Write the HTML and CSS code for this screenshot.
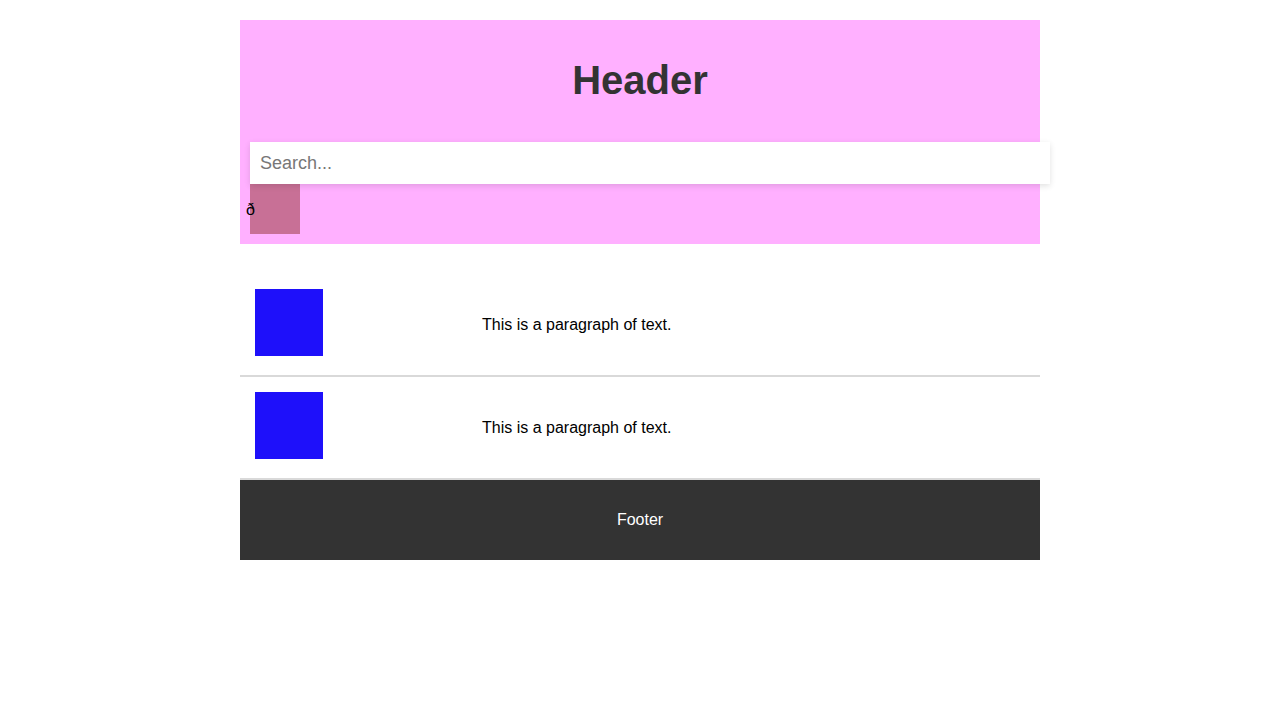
FILE: index.html
```html
<!DOCTYPE html>
<html>
<head>
<meta charset="utf-8">
<link rel="stylesheet" href="styles.css">
</head>
<body>
<div class="page">
  <header class="header">
    <h1 class="title">Header</h1>
    <form class="search">
      <input class="search-input" type="text" placeholder="Search...">
      <button class="search-btn" type="button"><span class="glyph">ð</span></button>
    </form>
  </header>
  <main class="list">
    <div class="row">
      <div class="thumb-wrap"><div class="thumb"></div></div>
      <p class="text">This is a paragraph of text.</p>
    </div>
    <div class="row">
      <div class="thumb-wrap"><div class="thumb"></div></div>
      <p class="text">This is a paragraph of text.</p>
    </div>
  </main>
  <footer class="footer">Footer</footer>
</div>
</body>
</html>
```
FILE: styles.css
```css
html, body {
  margin: 0;
  padding: 0;
  background: #fff;
  font-family: "Liberation Sans", Arial, sans-serif;
}
.page {
  width: 800px;
  margin: 20px auto 0;
}
.header {
  background: #ffb0ff;
  padding: 10px 10px 10px;
  display: flex;
  flex-direction: column;
  align-items: flex-start;
}
.title {
  align-self: stretch;
  text-align: center;
  font-size: 40px;
  font-weight: bold;
  color: #333;
  margin: 27px 0 0;
  line-height: 46px;
  height: 46px;
}
.search {
  margin: 39px 0 0;
  display: flex;
  flex-direction: column;
  align-items: flex-start;
  width: 780px;
}
.search-input {
  box-sizing: content-box;
  width: 780px;
  height: 22px;
  padding: 10px;
  border: none;
  outline: none;
  margin: 0;
  font-family: "Liberation Sans", Arial, sans-serif;
  font-size: 18px;
  color: #333;
  background: #fff;
  box-shadow: 0 2px 6px rgba(0, 0, 0, 0.12);
  position: relative;
  z-index: 1;
}
.search-input::placeholder {
  color: #777;
}
.search-btn {
  width: 50px;
  height: 50px;
  padding: 0;
  margin: 0;
  border: none;
  background: #c87096;
  display: flex;
  align-items: center;
  justify-content: flex-start;
  font-family: "Liberation Sans", Arial, sans-serif;
  font-size: 16px;
  color: #000;
}
.glyph {
  margin-left: -4px;
  margin-top: 2px;
}
.list {
  margin-top: 30px;
}
.row {
  display: flex;
  align-items: center;
  padding: 15px;
  border-bottom: 2px solid #d9d9d9;
}
.thumb-wrap {
  width: 227px;
  flex: none;
  padding-bottom: 4px;
}
.thumb {
  width: 68px;
  height: 67px;
  background: #1e10fa;
}
.text {
  margin: 0;
  font-size: 16px;
  color: #000;
}
.footer {
  background: #333;
  color: #fff;
  height: 80px;
  display: flex;
  align-items: center;
  justify-content: center;
  font-size: 16px;
}
```
